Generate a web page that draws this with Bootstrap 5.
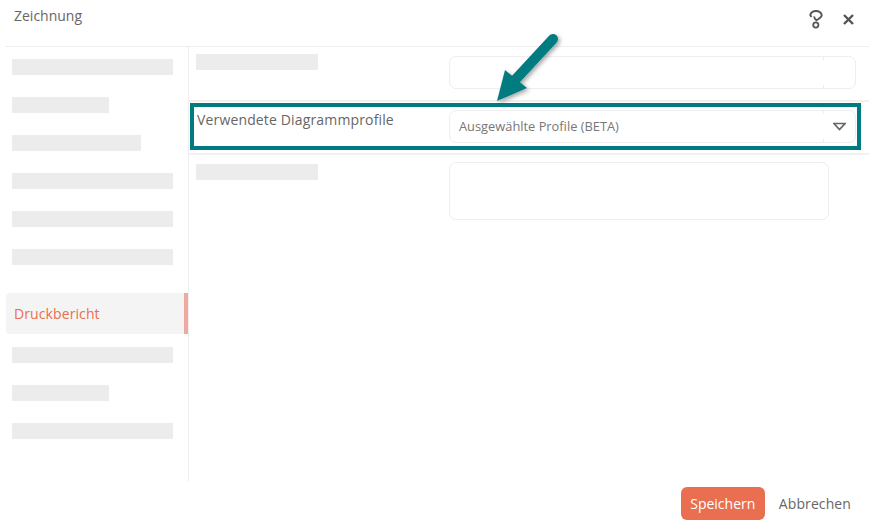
<!DOCTYPE html>
<html lang="de">
<head>
  <meta charset="UTF-8" />
  <title>Zeichnung</title>
  <meta name="viewport" content="width=device-width, initial-scale=1.0" />
  <link href="https://cdn.jsdelivr.net/npm/bootstrap@5.3.0/dist/css/bootstrap.min.css" rel="stylesheet" />
  <style>
    body { background: #fff; font-family: "Open Sans", sans-serif; color: #666; width: 875px; height: 525px; overflow: hidden; position: relative; }
    .dlg-head { height: 47px; margin: 0 6px 0 5px; padding: 5px 9px 0; border-bottom: 1px solid #eee; font-size: 14px; }
    .dlg-tools { margin-top: 5px; margin-right: 6px; gap: 20px; }
    .dlg-main { height: 435px; margin-left: 5px; }
    .dlg-side { width: 184px; border-right: 1px solid #eee; padding-top: 12px; flex: none; }
    .ph { background: #ececec; height: 16px; }
    .side-ph { margin: 0 15px 22px 7px; }
    .w-full { width: 161px; }
    .w-short { width: 97px; }
    .w-mid { width: 129px; }
    .side-act { height: 41px; margin: 28px 0 13px 1px; padding-left: 8px; background: #f4f4f4; color: #e96f50; border-right: 4px solid #eeaaa0; border-radius: 4px 0 0 4px; font-size: 14px; letter-spacing: .1px; }
    .dlg-body { width: 680px; flex: none; }
    .form-line { display: flex; padding-left: 7px; border-bottom: 2px solid #f1f1f1; }
    .line-1 { height: 55px; padding-top: 7px; }
    .line-2 { height: 52px; padding-top: 8px; border-bottom: 0; }
    .line-3 { padding-top: 9px; border-top: 2px solid #f1f1f1; border-bottom: 0; margin-top: -1px; }
    .ph-label { width: 122px; margin-right: 131px; flex: none; }
    .line-lbl { width: 253px; flex: none; font-size: 14px; line-height: 20px; padding-left: 1px; letter-spacing: .15px; }
    .fake-in { border: 1px solid #eee; border-radius: 7px; }
    .in-1 { width: 407px; height: 33px; margin-top: 2px; display: flex; justify-content: flex-end; }
    .in-sel { width: 407px; height: 33px; padding-left: 9px; font-size: 12.85px; line-height: 31px; color: #777; }
    .in-cap { width: 32px; height: 100%; flex: none; position: relative; }
    .in-cap::before, .in-cap::after { content: ""; position: absolute; left: 0; width: 1px; height: 3px; background: #eee; }
    .in-cap::before { top: 0; }
    .in-cap::after { bottom: 0; }
    .in-area { width: 380px; height: 58px; margin-top: -2px; }
    .dlg-foot { height: 43px; padding-top: 5px; padding-right: 24px; gap: 14px; font-size: 14px; }
    .btn-save { background: #e96f50; color: #fff; border: 0; border-radius: 6px; width: 84px; height: 33px; padding: 0; font-size: 14px; }
    .btn-save:hover { background: #e96f50; color: #fff; }
    .btn-cancel { color: #666; border: 0; padding: 0; height: 33px; font-size: 14px; letter-spacing: .1px; }
    .mark-box { position: absolute; left: 190px; top: 103px; width: 671px; height: 47px; border: 4px solid #007c80; }
    .mark-arrow { position: absolute; left: 490px; top: 28px; }
  </style>
</head>
<body>
  <div class="dlg-head d-flex justify-content-between align-items-start">
    <span>Zeichnung</span>
    <div class="dlg-tools d-flex align-items-center">
      <svg width="14" height="19" viewBox="0 0 14 19" fill="none" stroke="#555" stroke-width="1.8"><path d="M2.5 7L1.2 5C2 2.5 4.5 1 7 1s5 1.5 5.8 4c0 2.5-2.8 3.5-5.3 5.2C6 9 5 8 5.2 6.3"/><circle cx="6.8" cy="15" r="2.6"/></svg>
      <svg width="11" height="11" viewBox="0 0 11 11" stroke="#555" stroke-width="2.4"><path d="M1 1l9 9M10 1l-9 9"/></svg>
    </div>
  </div>
  <div class="dlg-main d-flex">
    <div class="dlg-side">
      <div class="ph side-ph w-full"></div>
      <div class="ph side-ph w-short"></div>
      <div class="ph side-ph w-mid"></div>
      <div class="ph side-ph w-full"></div>
      <div class="ph side-ph w-full"></div>
      <div class="ph side-ph w-full mb-0"></div>
      <div class="side-act d-flex align-items-center">Druckbericht</div>
      <div class="ph side-ph w-full"></div>
      <div class="ph side-ph w-short"></div>
      <div class="ph side-ph w-full"></div>
    </div>
    <div class="dlg-body">
      <div class="form-line line-1">
        <div class="ph ph-label"></div>
        <div class="fake-in in-1"><div class="in-cap"></div></div>
      </div>
      <div class="form-line line-2">
        <div class="line-lbl">Verwendete Diagrammprofile</div>
        <div class="fake-in in-sel d-flex justify-content-between align-items-center">
          <span>Ausgewählte Profile (BETA)</span>
          <div class="in-cap d-flex align-items-center justify-content-center">
            <svg width="13" height="10" viewBox="0 0 13 10" fill="none" stroke="#666" stroke-width="1.7"><path d="M1 1.5h11L6.5 7.5z"/></svg>
          </div>
        </div>
      </div>
      <div class="form-line line-3">
        <div class="ph ph-label"></div>
        <div class="fake-in in-area"></div>
      </div>
    </div>
  </div>
  <div class="dlg-foot d-flex justify-content-end align-items-start">
    <button class="btn btn-save" type="button">Speichern</button>
    <button class="btn btn-cancel" type="button">Abbrechen</button>
  </div>

  <div class="mark-box"></div>
  <svg class="mark-arrow" width="80" height="80" viewBox="0 0 80 80">
    <defs><filter id="sh" x="-20%" y="-20%" width="150%" height="150%"><feDropShadow dx="2" dy="2" stdDeviation="2" flood-color="#000" flood-opacity=".35"/></filter></defs>
    <g filter="url(#sh)" fill="#007c80">
      <path d="M63 11L25 52" stroke="#007c80" stroke-width="10" stroke-linecap="round"/>
      <path d="M7 73L15 42L37 60z"/>
    </g>
  </svg>
</body>
</html>
